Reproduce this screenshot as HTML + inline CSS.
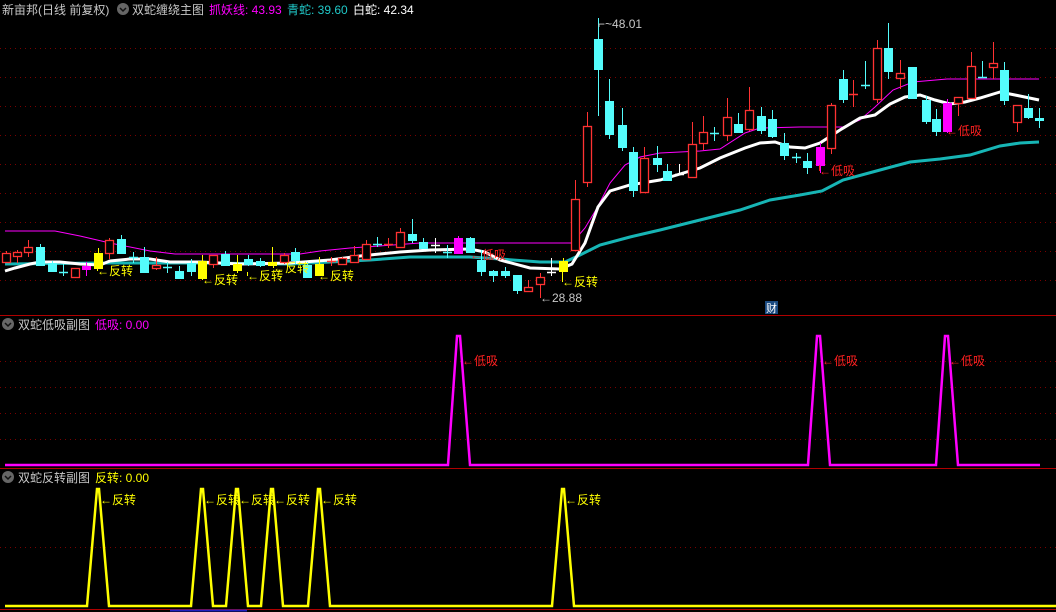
<!DOCTYPE html>
<html><head><meta charset="utf-8"><style>
html,body{margin:0;padding:0;background:#000;width:1056px;height:612px;overflow:hidden}
svg{display:block}
text{font-family:"Liberation Sans","Noto Sans CJK SC",sans-serif;font-size:12px}
</style></head><body>
<svg id="s" width="1056" height="612" xmlns="http://www.w3.org/2000/svg">
<g id="grid" stroke="#7a0000" stroke-dasharray="1,4" stroke-width="1"></g>
<line x1="0" y1="315.5" x2="1056" y2="315.5" stroke="#b00000"/>
<line x1="0" y1="468.5" x2="1056" y2="468.5" stroke="#b00000"/>
<line x1="0" y1="609.5" x2="1056" y2="609.5" stroke="#b00000"/>
<line x1="170" y1="610.5" x2="247" y2="610.5" stroke="#2020c0" stroke-width="2"/>
<polyline fill="none" stroke="#ff00ff" stroke-width="1" points="5,231 55,231 80,236 110,243 150,251 175,254 300,254 320,251 350,248 380,246 420,243 572,243 585,228 597,208 610,183 625,165 640,157 660,153 700,151 720,149 745,133 760,128 800,127 843,127 860,120 875,107 893,90 913,82 947,79 1039,79"/>
<polyline fill="none" stroke="#17b5b5" stroke-width="3" points="5,264 100,263 200,263 290,264 330,262 370,260 410,257 470,257 500,259 540,262 565,262 580,255 600,245 630,237 660,230 700,220 740,210 770,200 800,195 822,191 843,180 880,170 910,162 940,159 970,155 1000,146 1020,143 1039,142"/>
<polyline fill="none" stroke="#ffffff" stroke-width="3" points="5,271 15,268 30,264 40,262 60,262 80,264 100,265 110,261 130,259 150,259 170,262 200,262 240,264 290,263 330,260 360,256 400,252 430,250 470,249 485,252 500,260 530,268 560,269 572,264 585,243 598,207 610,191 630,185 660,180 680,174 700,168 720,158 745,148 760,143 775,142 790,147 805,148 820,143 840,130 860,118 875,115 890,104 905,97 920,95 935,100 950,104 965,102 980,98 1000,92 1015,95 1039,100"/>
<g id="candles"></g>
<g id="labels"></g>
<polyline fill="none" stroke="#ff00ff" stroke-width="2.5" points="5,465 448,465 457,336 460,336 470,465 808,465 817,336 820,336 830,465 936,465 945,336 948,336 958,465 1040,465"/>
<polyline fill="none" stroke="#ffff00" stroke-width="2.5" points="5,606 87,606 97,489 99,489 109,606 191,606 201,489 203,489 213,606 226,606 236,489 238,489 248,606 261,606 271,489 273,489 283,606 308,606 318,489 320,489 330,606 552,606 562,489 564,489 574,606 1056,606"/>
<circle cx="123" cy="9" r="6" fill="#666"/><path d="M120,8 L123,11 L126,8" stroke="#111" stroke-width="1.5" fill="none"/>
<text x="2" y="14" fill="#c8c8c8">新亩邦(日线 前复权)</text>
<text x="132" y="14" fill="#c8c8c8">双蛇缠绕主图</text>
<text x="209" y="14" fill="#ff00ff">抓妖线: 43.93</text>
<text x="287" y="14" fill="#20c8c8">青蛇: 39.60</text>
<text x="353" y="14" fill="#ffffff">白蛇: 42.34</text>
<circle cx="8" cy="324" r="6" fill="#666"/><path d="M5,323 L8,326 L11,323" stroke="#111" stroke-width="1.5" fill="none"/>
<text x="18" y="329" fill="#c8c8c8">双蛇低吸副图</text>
<text x="95" y="329" fill="#ff00ff">低吸: 0.00</text>
<circle cx="8" cy="477" r="6" fill="#666"/><path d="M5,476 L8,479 L11,476" stroke="#111" stroke-width="1.5" fill="none"/>
<text x="18" y="482" fill="#c8c8c8">双蛇反转副图</text>
<text x="95" y="482" fill="#ffff00">反转: 0.00</text>
<rect x="765" y="301" width="13" height="13" fill="#1a4a80"/>
<text x="766" y="312" fill="#fff" style="font-size:11px">财</text>
</svg>
<script>
var ns="http://www.w3.org/2000/svg";
function el(p,t,a,txt){var e=document.createElementNS(ns,t);for(var k in a)e.setAttribute(k,a[k]);if(txt)e.textContent=txt;p.appendChild(e);return e;}
var g=document.getElementById('grid');
[48,77,106,135,164,193,222,251,280,361,387,413,439,547].forEach(function(y){el(g,'line',{x1:0,y1:y+.5,x2:1056,y2:y+.5});});
var C={r:'#ff3232',c:'#54fcfc',y:'#ffff00',m:'#ff00ff',w:'#ffffff'};
var d=[
[6,'r',253,262,251,263],[17,'r',252,256,250,263],[28,'r',247,252,240,257],[40,'c',247,265,244,265],[52,'c',263,271,261,272],[63,'c',272,272,264,276],[75,'r',268,277,268,277],[86,'m',266,269,262,276],[98,'y',253,268,248,268],[109,'r',240,253,238,259],[121,'c',239,253,235,253],[133,'c',257,257,252,263],[144,'c',257,272,247,272],[156,'r',265,268,257,270],[167,'c',267,267,262,273],[179,'c',271,278,266,278],[191,'c',263,271,259,276],[202,'y',261,278,255,278],[213,'r',255,264,255,268],[225,'c',254,265,251,263],[237,'y',264,270,255,273],[248,'c',259,264,255,266],[260,'c',261,265,258,267],[272,'y',262,265,247,266],[284,'r',255,262,253,264],[295,'c',252,260,248,264],[307,'c',265,277,262,278],[319,'y',264,275,257,275],[331,'r',261,262,257,266],[342,'r',258,264,257,264],[354,'r',255,262,246,262],[366,'r',244,259,240,260],[377,'c',244,244,237,247],[388,'r',244,244,238,248],[400,'r',232,247,228,248],[412,'c',234,240,219,243],[423,'c',242,248,238,248],[435,'w',245,245,238,253],[447,'c',252,252,245,258],[458,'m',238,253,236,253],[470,'c',238,252,237,253],[481,'c',260,271,250,276],[493,'c',271,275,270,282],[505,'c',271,275,267,278],[517,'c',275,290,275,294],[528,'r',287,291,280,292],[540,'r',277,284,273,298],[551,'w',272,272,258,276],[563,'y',261,271,258,271],[575,'r',199,250,180,250],
[587,'r',126,182,112,187],[598,'c',39,69,18,116],[609,'c',101,134,79,139],[622,'c',125,147,108,151],[633,'c',152,190,147,197],[644,'r',158,192,147,193],[657,'c',158,164,146,172],[667,'c',171,180,164,181],[679,'w',174,174,164,175],[692,'r',144,177,122,178],[703,'r',132,143,116,150],[714,'c',133,133,127,141],[727,'r',117,135,98,141],[738,'c',124,132,113,133],[749,'r',110,129,87,131],[761,'c',116,130,107,134],[772,'c',119,136,110,138],[784,'c',143,155,133,160],[796,'c',157,157,153,163],[807,'c',161,167,153,174],[820,'m',147,165,143,173],[831,'r',105,148,103,154],[843,'c',79,99,70,103],[853,'r',94,94,80,107],[865,'c',85,85,61,89],[877,'r',48,99,40,103],[888,'c',48,71,23,79],[900,'r',73,78,60,89],[912,'c',67,98,67,98],[926,'c',100,121,96,124],[936,'c',119,131,109,136],[947,'m',103,131,99,133],[958,'r',97,103,97,116],[971,'r',66,98,52,98],[982,'c',77,77,61,78],[993,'r',63,67,42,79],[1004,'c',70,100,62,105],[1017,'r',105,122,105,132],[1028,'c',108,117,94,119],[1039,'c',118,120,108,128]];
var cg=document.getElementById('candles');
d.forEach(function(c){var x=c[0],col=C[c[1]],t=c[2],b=c[3],h=c[4],l=c[5];
 el(cg,'line',{x1:x+.5,y1:h,x2:x+.5,y2:l,stroke:col,'stroke-width':1});
 if(b-t<2){el(cg,'line',{x1:x-4,y1:t+.5,x2:x+5,y2:t+.5,stroke:col,'stroke-width':1.5});}
 else if(c[1]=='r'){el(cg,'rect',{x:x-3.5,y:t+.5,width:8,height:b-t,fill:'#000',stroke:col,'stroke-width':1.3});}
 else {el(cg,'rect',{x:x-4,y:t,width:9,height:b-t+1,fill:col});}
});
var lg=document.getElementById('labels');
function lab(x,y,txt,col,vy){ if(vy)el(lg,'line',{x1:x+.5,y1:vy,x2:x+.5,y2:y-4,stroke:col}); el(lg,'text',{x:x,y:y,fill:col},txt);}
lab(97,275,'←反转','#ffff00',268);lab(202,284,'←反转','#ffff00',278);lab(247,280,'←反转','#ffff00',272);
lab(273,272,'←反转','#ffff00',266);lab(318,280,'←反转','#ffff00',275);lab(562,286,'←反转','#ffff00',271);
lab(470,259,'←低吸','#ff2020');lab(819,175,'←低吸','#ff2020',165);lab(946,135,'←低吸','#ff2020',131);
el(lg,'text',{x:598,y:28,fill:'#c8c8c8'},'⌐~48.01');
el(lg,'text',{x:540,y:302,fill:'#c8c8c8'},'←28.88');
[[462,365,'←低吸','#ff2020'],[822,365,'←低吸','#ff2020'],[949,365,'←低吸','#ff2020'],
[100,504,'←反转','#ffff00'],[204,504,'←反转','#ffff00'],[239,504,'←反转','#ffff00'],[274,504,'←反转','#ffff00'],[321,504,'←反转','#ffff00'],[565,504,'←反转','#ffff00']].forEach(function(a){el(lg,'text',{x:a[0],y:a[1],fill:a[3]},a[2]);});
</script>
</body></html>
